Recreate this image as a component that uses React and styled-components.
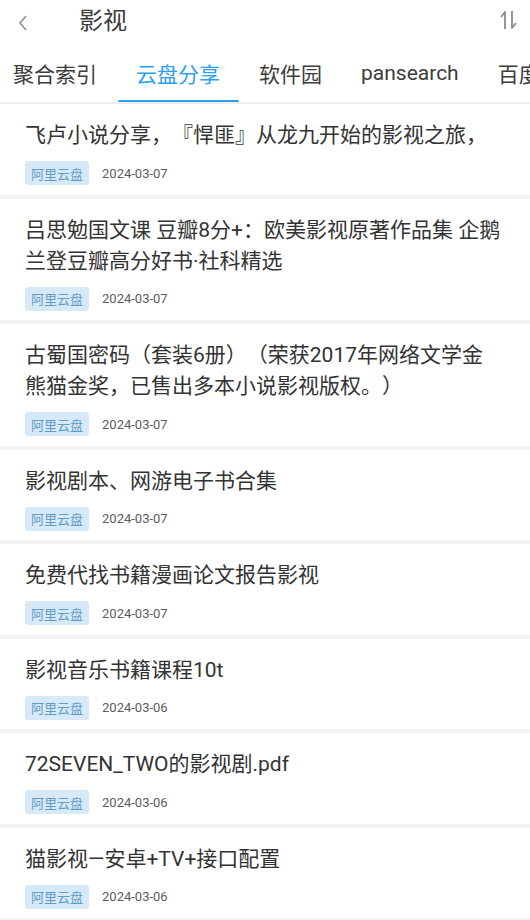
import React from 'react';
import styled, { createGlobalStyle } from 'styled-components';

const GlobalStyle = createGlobalStyle`
    body {
        margin: 0;
        background: #fff;
        font-family: Roboto, "Noto Sans CJK SC", sans-serif;
        text-spacing-trim: space-all;
    }
`;

const tabs = ['聚合索引', '云盘分享', '软件园', 'pansearch', '百度网盘'];

const items = [
    { title: '飞卢小说分享，『悍匪』从龙九开始的影视之旅，', date: '2024-03-07' },
    { title: '吕思勉国文课 豆瓣8分+：欧美影视原著作品集 企鹅兰登豆瓣高分好书·社科精选', date: '2024-03-07' },
    { title: '古蜀国密码（套装6册）（荣获2017年网络文学金熊猫金奖，已售出多本小说影视版权。）', date: '2024-03-07' },
    { title: '影视剧本、网游电子书合集', date: '2024-03-07' },
    { title: '免费代找书籍漫画论文报告影视', date: '2024-03-07' },
    { title: '影视音乐书籍课程10t', date: '2024-03-06' },
    { title: '72SEVEN_TWO的影视剧.pdf', date: '2024-03-06' },
    { title: '猫影视—安卓+TV+接口配置', date: '2024-03-06' },
];

const App = () => {
    return (
        <Page lang="zh-CN">
            <GlobalStyle />
            <Header>
                <BackButton>
                    <svg width="12" height="18" viewBox="0 0 12 18">
                        <path d="M9 2 L3 9 L9 16" fill="none" stroke="#8a8a8a" strokeWidth="1.4" />
                    </svg>
                </BackButton>
                <Title>影视</Title>
                <SortButton>
                    <svg width="22" height="22" viewBox="0 0 22 22">
                        <path d="M7 20 V3 L3 8" fill="none" stroke="#8c8c8c" strokeWidth="1.8" strokeLinejoin="round" />
                        <path d="M14 2 V19 L18 14" fill="none" stroke="#8c8c8c" strokeWidth="1.8" strokeLinejoin="round" />
                    </svg>
                </SortButton>
            </Header>
            <TabBar>
                {tabs.map((t, i) => (
                    <Tab key={t} active={i === 1}>{t}</Tab>
                ))}
            </TabBar>
            <List>
                {items.map((item, i) => (
                    <Item key={i}>
                        <ItemTitle>{item.title}</ItemTitle>
                        <Meta>
                            <Tag>阿里云盘</Tag>
                            <DateText>{item.date}</DateText>
                        </Meta>
                    </Item>
                ))}
            </List>
        </Page>
    );
};

export default App;

const Page = styled.div`
    width: 530px;
    height: 920px;
    overflow: hidden;
    background: #fff;
`;

const Header = styled.div`
    height: 45px;
    display: flex;
    align-items: center;
    padding: 0 10px 0 17px;
`;

const BackButton = styled.div`
    display: flex;
    align-items: center;
    width: 62px;
    margin-top: 1px;
`;

const Title = styled.div`
    flex: 1;
    font-size: 24px;
    color: #3c3c3c;
    line-height: 45px;
    margin-top: -2px;
`;

const SortButton = styled.div`
    display: flex;
    align-items: center;
    margin-top: -6px;
`;

const TabBar = styled.div`
    height: 57px;
    display: flex;
    align-items: stretch;
    margin-left: -5px;
    white-space: nowrap;
    overflow: hidden;
    border-bottom: 2px solid #efefef;
`;

const Tab = styled.div`
    position: relative;
    flex-shrink: 0;
    display: flex;
    align-items: center;
    padding: 0 18px 1px 18px;
    margin-right: 3px;
    font-size: 21px;
    color: ${p => (p.active ? '#2d9ff2' : '#3c3c3c')};

    &::after {
        content: '';
        display: ${p => (p.active ? 'block' : 'none')};
        position: absolute;
        left: 0;
        right: -1px;
        bottom: -1px;
        height: 3px;
        border-radius: 2px;
        background: #2d9ff2;
    }
`;

const List = styled.div`
    display: flex;
    flex-direction: column;
`;

const Item = styled.div`
    padding: 16px 27px 9.5px 25px;
    border-bottom: 4px solid #f2f2f2;
    display: flex;
    flex-direction: column;
    gap: 10px;
`;

const ItemTitle = styled.div`
    font-size: 21px;
    line-height: 31px;
    color: #333;
`;

const Meta = styled.div`
    display: flex;
    align-items: center;
    gap: 13px;
    height: 24px;
`;

const Tag = styled.span`
    display: inline-flex;
    align-items: center;
    height: 24px;
    padding: 0 6px;
    border-radius: 3px;
    background: #d7e9f6;
    color: #5e9cc8;
    font-size: 13px;
`;

const DateText = styled.span`
    font-size: 13px;
    color: #5c5c5c;
`;
